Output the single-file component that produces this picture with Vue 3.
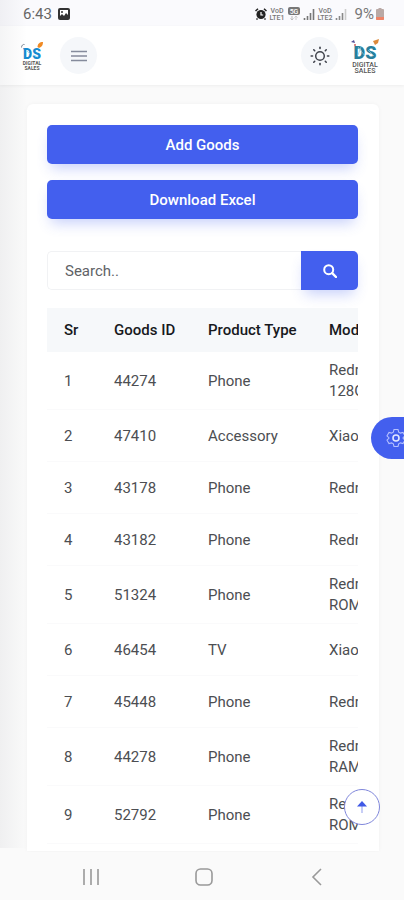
<script setup>
import { ref } from 'vue'

const query = ref('')

const goods = [
  { sr: 1, id: '44274', type: 'Phone', model: ['Redmi', '128GB'] },
  { sr: 2, id: '47410', type: 'Accessory', model: ['Xiaomi'] },
  { sr: 3, id: '43178', type: 'Phone', model: ['Redmi'] },
  { sr: 4, id: '43182', type: 'Phone', model: ['Redmi'] },
  { sr: 5, id: '51324', type: 'Phone', model: ['Redmi', 'ROM'] },
  { sr: 6, id: '46454', type: 'TV', model: ['Xiaomi'] },
  { sr: 7, id: '45448', type: 'Phone', model: ['Redmi'] },
  { sr: 8, id: '44278', type: 'Phone', model: ['Redmi', 'RAM'] },
  { sr: 9, id: '52792', type: 'Phone', model: ['Redmi', 'ROM'] }
]

const rays = [0, 45, 90, 135, 180, 225, 270, 315]

function toTop() {
  window.scrollTo({ top: 0, behavior: 'smooth' })
}
</script>

<template>
  <div class="page">
    <div class="status">
      <div class="status-group">
        <span class="clock">6:43</span>
        <svg class="i12" viewBox="0 0 12 12">
          <rect x="0" y="0" width="12" height="12" rx="2" fill="#333" />
          <path d="M2 2h8v5L8 5 6 8 4 6 2 8z" fill="#fff" />
          <circle cx="4" cy="4" r="1" fill="#333" />
        </svg>
      </div>
      <div class="status-group tight">
        <svg class="i12" viewBox="0 0 12 12">
          <circle cx="6" cy="6.500" r="4.600" fill="#222" />
          <path d="M.5 3 3 .8M11.500 3 9 .8M2.500 10.500 1.500 11.500M9.500 10.500l1 1" stroke="#222" stroke-width="1.500" />
          <path d="M6 4v3h2.200" stroke="#fff" stroke-width="1.200" fill="none" />
        </svg>
        <svg class="i16" viewBox="0 0 16 14">
          <text x="8" y="6" class="tiny">VoD</text>
          <text x="8" y="13" class="tiny">LTE1</text>
        </svg>
        <svg class="i14" viewBox="0 0 14 14">
          <rect x="1" y="0" width="12" height="8" rx="2" fill="#777" />
          <text x="7" y="6.500" class="tiny inv">5G</text>
          <path d="M5 9v4M3.500 11.500 5 13l1.500-1.500" stroke="#bbb" fill="none" />
          <path d="M9 13V9M7.500 10.500 9 9l1.500 1.500" stroke="#ccc" fill="none" />
        </svg>
        <svg class="i12" viewBox="0 0 12 12">
          <path d="M1.500 10v2M4.500 8v4M7.500 5v7M10.500 1v11" stroke="#777" stroke-width="1.600" />
        </svg>
        <svg class="i16" viewBox="0 0 16 14">
          <text x="8" y="6" class="tiny">VoD</text>
          <text x="8" y="13" class="tiny">LTE2</text>
        </svg>
        <svg class="i12" viewBox="0 0 12 12">
          <path d="M1.500 10v2M4.500 8v4M7.500 5v7" stroke="#888" stroke-width="1.600" />
          <path d="M10.500 1v11" stroke="#ccc" stroke-width="1.600" />
        </svg>
        <span class="percent">9%</span>
        <svg class="battery" viewBox="0 0 8 12">
          <path d="M2.500 0h3v1H7a1 1 0 0 1 1 1v9a1 1 0 0 1-1 1H1a1 1 0 0 1-1-1V2a1 1 0 0 1 1-1h1.500z" fill="#b9a9a6" />
          <path d="M0 9h8v2a1 1 0 0 1-1 1H1a1 1 0 0 1-1-1z" fill="#ee8468" />
        </svg>
      </div>
    </div>

    <header class="topbar">
      <div class="bar-group">
        <a href="#" class="brand" aria-label="Digital Sales">
          <svg viewBox="0 0 24 30">
            <path d="M17.500 6c0-3 2-5 5.500-5 0 3-1 5-4 6z" fill="#f08a24" />
            <path d="M1.500 6.500c0-2 1.500-3.500 3-3M3 7.500l2 1" stroke="#7b8796" fill="none" />
            <text x="12" y="17.500" class="ds blue">DS</text>
            <path d="M6 9l4 4M13 14l5 2" stroke="#8fdcf5" stroke-width=".8" />
            <text x="12" y="23.500" class="sub">DIGITAL</text>
            <text x="12" y="29" class="sub">SALES</text>
          </svg>
        </a>
        <button class="round" type="button" aria-label="Menu">
          <svg class="i16" viewBox="0 0 16 12">
            <path d="M0 1.500h16M0 6h16M0 10.500h16" stroke="#858b9c" stroke-width="1.700" />
          </svg>
        </button>
      </div>
      <div class="bar-group right">
        <button class="round" type="button" aria-label="Light mode">
          <svg class="i20" viewBox="0 0 20 20">
            <circle cx="10" cy="10" r="4.300" fill="none" stroke="#40434c" stroke-width="1.500" />
            <path
              v-for="a in rays"
              :key="a"
              d="M10 1.200v1.300"
              :transform="`rotate(${a} 10 10)`"
              stroke="#40434c"
              stroke-width="1.600"
              stroke-linecap="round"
            />
          </svg>
        </button>
        <a href="#" class="brand large" aria-label="Account">
          <svg viewBox="0 0 30 36">
            <path d="M23 3l6-2-1 4-3 2z" fill="#dc8a3c" />
            <path d="M1 4l3-2 1 3z" fill="#514b96" />
            <circle cx="5" cy="7" r="1" fill="#d05c5c" />
            <text x="15" y="20.500" class="ds teal">DS</text>
            <path d="M8 9l7 9M11 9l-3 8M18 12l6 6" stroke="#90cbdc" stroke-width=".7" />
            <text x="15" y="28.500" class="sub big">DIGITAL</text>
            <text x="15" y="35" class="sub big">SALES</text>
          </svg>
        </a>
      </div>
    </header>

    <main class="content">
      <section class="card">
        <div class="actions">
          <button class="btn" type="button">Add Goods</button>
          <button class="btn" type="button">Download Excel</button>
        </div>
        <form class="search" @submit.prevent>
          <input v-model="query" type="text" placeholder="Search.." aria-label="Search" />
          <button class="go" type="submit" aria-label="Search goods">
            <svg class="i14" viewBox="0 0 14 14">
              <circle cx="5.700" cy="5.700" r="4.500" fill="none" stroke="#fff" stroke-width="2" />
              <path d="M9.200 9.200 13 13" stroke="#fff" stroke-width="2.400" stroke-linecap="round" />
            </svg>
          </button>
        </form>
        <div class="table-wrap">
          <table>
            <colgroup>
              <col class="c-sr" /><col class="c-id" /><col class="c-type" /><col class="c-model" />
            </colgroup>
            <thead>
              <tr><th>Sr</th><th>Goods ID</th><th>Product Type</th><th>Model</th></tr>
            </thead>
            <tbody>
              <tr v-for="g in goods" :key="g.sr">
                <td>{{ g.sr }}</td>
                <td>{{ g.id }}</td>
                <td>{{ g.type }}</td>
                <td><div v-for="line in g.model" :key="line">{{ line }}</div></td>
              </tr>
            </tbody>
          </table>
        </div>
      </section>
    </main>

    <nav class="navbar">
      <button type="button" aria-label="Recent apps">
        <svg class="i20" viewBox="0 0 20 20">
          <path d="M3 2v16M10 2v16M17 2v16" stroke="#999" stroke-width="1.600" />
        </svg>
      </button>
      <button type="button" aria-label="Home">
        <svg class="i20" viewBox="0 0 20 20">
          <rect x="2" y="2" width="16" height="16" rx="4.500" fill="none" stroke="#999" stroke-width="1.600" />
        </svg>
      </button>
      <button type="button" aria-label="Back">
        <svg class="i20" viewBox="0 0 20 20">
          <path d="M14 2 6 10l8 8" fill="none" stroke="#999" stroke-width="1.600" />
        </svg>
      </button>
    </nav>

    <div class="edge"></div>
    <button class="settings" type="button" aria-label="Settings">
      <svg class="i20" viewBox="0 0 20 20">
        <path
          d="M8 1.500h4l.7 2.600 1.700 1 2.600-.7 2 3.400-1.900 1.900v.6l1.900 1.900-2 3.400-2.600-.7-1.700 1-.7 2.600H8l-.7-2.600-1.700-1-2.600.7-2-3.400 1.900-1.900v-.6L1 7.800l2-3.400 2.600.7 1.700-1z"
          fill="none"
          stroke="#b4c0ff"
          stroke-width="1.100"
        />
        <circle cx="10" cy="10" r="3" fill="none" stroke="#e2e7ff" stroke-width="1.600" />
      </svg>
    </button>
    <button class="to-top" type="button" aria-label="Back to top" @click="toTop">
      <svg class="i14" viewBox="0 0 14 14">
        <path d="M7 5v8" stroke="#a9b3f2" stroke-width="1.300" />
        <path d="M7 1 12 6.500H2z" fill="#4059e6" />
      </svg>
    </button>
  </div>
</template>

<style>
body {
  background: #fafafa;
}
</style>

<style scoped>
* {
  box-sizing: border-box;
}
.page {
  position: relative;
  min-height: 100vh;
  display: flex;
  flex-direction: column;
  overflow: hidden;
  font-family: Roboto, "Liberation Sans", sans-serif;
  font-size: 15px;
  line-height: 21px;
  color: #4c4e52;
}
button {
  border: 0;
  padding: 0;
  background: none;
  font: inherit;
  color: inherit;
  display: flex;
  align-items: center;
  justify-content: center;
}
svg {
  display: block;
  flex: none;
}
.i12 { width: 12px; height: 12px; }
.i14 { width: 14px; height: 14px; }
.i16 { width: 16px; height: 14px; }
.i20 { width: 20px; height: 20px; }

.status {
  height: 26px;
  padding: 2px 20px 0 23px;
  display: flex;
  justify-content: space-between;
  align-items: center;
  background: #fafafd;
}
.status-group {
  display: flex;
  align-items: center;
  gap: 6px;
}
.tight {
  gap: 2px;
}
.clock {
  color: #666;
}
.percent {
  color: #777;
  padding-left: 6px;
}
.battery {
  width: 8px;
  height: 12px;
}
.tiny {
  font-size: 7px;
  font-weight: 500;
  fill: #777;
  text-anchor: middle;
}
.inv {
  fill: #fff;
}

.topbar {
  height: 59px;
  padding: 0 24px 0 20px;
  display: flex;
  justify-content: space-between;
  align-items: center;
  background: #fff;
  box-shadow: 0 1px 3px rgba(0, 0, 0, 0.05);
}
.bar-group {
  display: flex;
  align-items: center;
  gap: 16px;
}
.right {
  gap: 12px;
}
.round {
  width: 37px;
  height: 37px;
  border-radius: 50%;
  background: #f5f7fa;
}
.brand svg {
  width: 24px;
  height: 30px;
}
.large svg {
  width: 30px;
  height: 36px;
}
.ds {
  font-weight: 900;
  text-anchor: middle;
}
.blue {
  font-size: 14px;
  fill: #168bd0;
}
.teal {
  font-size: 18px;
  fill: #287f9c;
}
.sub {
  font-size: 5px;
  font-weight: 700;
  fill: #555;
  text-anchor: middle;
}
.big {
  font-size: 7px;
  font-weight: 500;
}

.content {
  flex: 1;
  padding: 19px 25px 0 27px;
}
.card {
  padding: 21px 21px 7px 20px;
  background: #fff;
  border-radius: 6px 6px 0 0;
  box-shadow: 0 0 4px rgba(0, 0, 0, 0.04);
}
.actions {
  display: flex;
  flex-direction: column;
  gap: 16px;
}
.btn {
  height: 39px;
  padding-top: 1px;
  border-radius: 5px;
  background: #435fee;
  color: #fff;
  font-weight: 500;
  box-shadow: 0 8px 14px -4px rgba(67, 95, 238, 0.3);
}
.search {
  display: flex;
  margin: 32px 0 18px;
}
.search input {
  flex: 1;
  min-width: 0;
  height: 39px;
  padding: 0 17px;
  border: 1px solid #f1f2f4;
  border-right: 0;
  border-radius: 5px 0 0 5px;
  background: #fff;
  font: inherit;
  color: #555;
  outline: none;
}
.search input::placeholder {
  color: #606266;
  opacity: 1;
}
.go {
  width: 57px;
  border-radius: 0 5px 5px 0;
  background: #435fee;
  box-shadow: 0 8px 14px -4px rgba(67, 95, 238, 0.3);
}

.table-wrap {
  overflow-x: auto;
  scrollbar-width: none;
}
table {
  width: 420px;
  table-layout: fixed;
  border-collapse: separate;
  border-spacing: 0;
}
.c-sr { width: 50px; }
.c-id { width: 94px; }
.c-type { width: 121px; }
th,
td {
  padding: 8px 0 7px 17px;
  text-align: left;
  vertical-align: middle;
}
th {
  height: 44px;
  background: #f6f8fa;
  color: #17191d;
  font-weight: 500;
}
td {
  height: 52px;
  border-bottom: 1px solid #fafafb;
}

.navbar {
  height: 48px;
  padding: 2px 30px 0 34px;
  display: grid;
  grid-template-columns: repeat(3, 1fr);
  background: #fafafa;
}

.edge {
  position: absolute;
  top: 0;
  bottom: 52px;
  left: 0;
  width: 27px;
  background: linear-gradient(90deg, rgba(40, 45, 65, 0.05), rgba(40, 45, 65, 0));
  pointer-events: none;
}
.settings {
  position: fixed;
  top: 417px;
  right: 0;
  width: 33px;
  height: 42px;
  padding-left: 15px;
  justify-content: flex-start;
  overflow: hidden;
  border-radius: 21px 0 0 21px;
  background: #435fee;
}
.to-top {
  position: fixed;
  right: 24px;
  bottom: 75px;
  width: 36px;
  height: 36px;
  border: 1px solid #7f86da;
  border-radius: 50%;
  background: #fff;
}
</style>
